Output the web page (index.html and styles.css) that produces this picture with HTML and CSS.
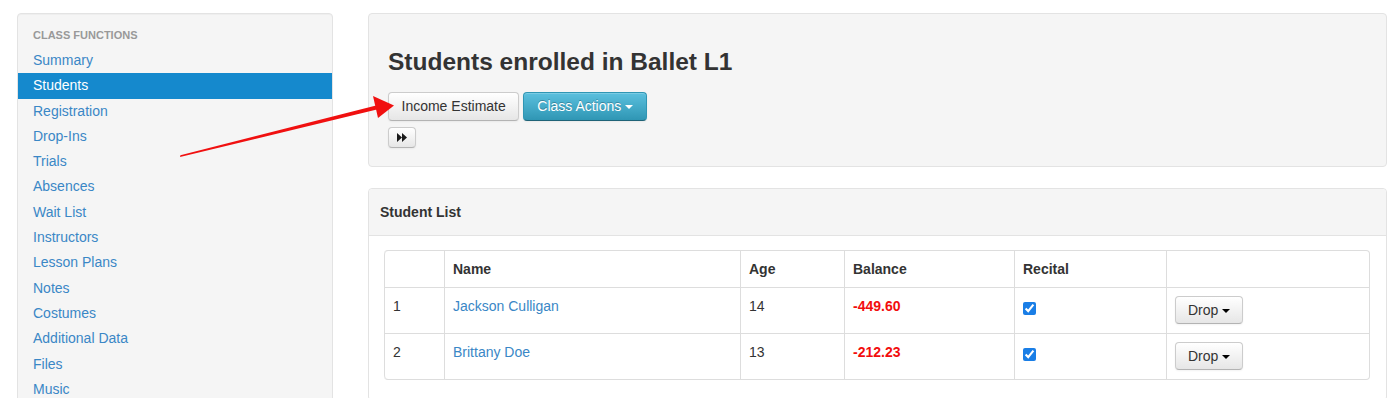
FILE: index.html
```html
<!DOCTYPE html>
<html>
<head>
<meta charset="utf-8">
<link rel="stylesheet" href="styles.css">
</head>
<body>
<div class="page">
  <aside class="sidebar">
    <div class="nav-header">CLASS FUNCTIONS</div>
    <ul class="nav-list">
      <li><a href="#">Summary</a></li>
      <li class="active"><a href="#">Students</a></li>
      <li><a href="#">Registration</a></li>
      <li><a href="#">Drop-Ins</a></li>
      <li><a href="#">Trials</a></li>
      <li><a href="#">Absences</a></li>
      <li><a href="#">Wait List</a></li>
      <li><a href="#">Instructors</a></li>
      <li><a href="#">Lesson Plans</a></li>
      <li><a href="#">Notes</a></li>
      <li><a href="#">Costumes</a></li>
      <li><a href="#">Additional Data</a></li>
      <li><a href="#">Files</a></li>
      <li><a href="#">Music</a></li>
    </ul>
  </aside>
  <main class="main">
    <section class="hero">
      <h2 class="title">Students enrolled in Ballet L1</h2>
      <div class="btn-row">
        <button class="btn">Income Estimate</button>
        <button class="btn btn-info">Class Actions <span class="caret"></span></button>
      </div>
      <div class="btn-row2">
        <button class="btn btn-mini" aria-label="forward">
          <svg width="10" height="9" viewBox="0 0 10 9"><path d="M0 0L5 4.5L0 9Z M5 0L10 4.5L5 9Z" fill="#1a1a1a"/></svg>
        </button>
      </div>
    </section>
    <section class="panel">
      <div class="panel-heading">Student List</div>
      <div class="panel-body">
        <table class="table">
          <thead>
            <tr>
              <th class="c-num"></th>
              <th class="c-name">Name</th>
              <th class="c-age">Age</th>
              <th class="c-bal">Balance</th>
              <th class="c-rec">Recital</th>
              <th class="c-act"></th>
            </tr>
          </thead>
          <tbody>
            <tr>
              <td>1</td>
              <td><a href="#">Jackson Culligan</a></td>
              <td>14</td>
              <td class="neg">-449.60</td>
              <td><input type="checkbox" checked></td>
              <td><button class="btn btn-drop">Drop <span class="caret dark"></span></button></td>
            </tr>
            <tr>
              <td>2</td>
              <td><a href="#">Brittany Doe</a></td>
              <td>13</td>
              <td class="neg">-212.23</td>
              <td><input type="checkbox" checked></td>
              <td><button class="btn btn-drop">Drop <span class="caret dark"></span></button></td>
            </tr>
          </tbody>
        </table>
      </div>
    </section>
  </main>
</div>
<svg class="arrow" width="1400" height="398" viewBox="0 0 1400 398">
  <path d="M180 157 L180.4 155.2 L380 104.5 L381 108.5 Z" fill="#f01010"/>
  <path d="M394 105.5 L373 96 L378 118 Z" fill="#f01010"/>
</svg>
</body>
</html>
```

FILE: styles.css
```css
* { box-sizing: border-box; }
html, body { margin: 0; padding: 0; background: #fff; }
body {
  font-family: "Liberation Sans", Arial, sans-serif;
  font-size: 14px;
  line-height: 20px;
  color: #333;
  height: 398px;
  overflow: hidden;
  position: relative;
}
a { color: #3a87c6; text-decoration: none; }

.page {
  display: flex;
  gap: 35px;
  padding: 13px 13px 0 17px;
  align-items: flex-start;
}

.sidebar {
  width: 316px;
  flex: none;
  background: #f5f5f5;
  border: 1px solid #e3e3e3;
  border-radius: 4px;
  padding: 11px 0 20px;
  box-shadow: inset 0 1px 1px rgba(0,0,0,0.03);
}
.nav-header {
  font-size: 11px;
  font-weight: bold;
  line-height: 20px;
  color: #999;
  padding: 0 15px 3px;
  text-transform: uppercase;
  height: 23px;
}
.nav-list { list-style: none; margin: 0; padding: 0; }
.nav-list li a {
  display: block;
  padding: 3px 15px;
  line-height: 19.3px;
  color: #3a87c6;
}
.nav-list li.active a {
  background: #1589cd;
  color: #fff;
}

.main { flex: 1; min-width: 0; display: flex; flex-direction: column; gap: 21px; }

.hero {
  background: #f5f5f5;
  border: 1px solid #e3e3e3;
  border-radius: 4px;
  padding: 30px 19px 18px;
  height: 154px;
}
.title {
  margin: 0 0 12px;
  font-size: 24.5px;
  line-height: 36px;
  font-weight: bold;
  color: #333;
}
.btn-row { display: flex; gap: 4px; height: 29px; }
.btn-row2 { margin-top: 6px; display: flex; }

.btn {
  font-family: "Liberation Sans", Arial, sans-serif;
  font-size: 14px;
  line-height: 19px;
  padding: 4px 12.5px;
  color: #333;
  background: linear-gradient(#ffffff, #e6e6e6);
  border: 1px solid #cccccc;
  border-bottom-color: #b3b3b3;
  border-radius: 4px;
  box-shadow: inset 0 1px 0 rgba(255,255,255,0.2), 0 1px 2px rgba(0,0,0,0.05);
  display: inline-flex;
  align-items: center;
  cursor: pointer;
}
.btn-info {
  color: #fff;
  background: linear-gradient(#5bc0de, #2f96b4);
  border-color: #2f96b4 #2f96b4 #1f6377;
  text-shadow: 0 -1px 0 rgba(0,0,0,0.25);
  padding: 4px 13px;
}
.caret {
  display: inline-block;
  width: 0; height: 0;
  margin-left: 4px;
  margin-top: 1px;
  border-top: 4px solid #fff;
  border-left: 4px solid transparent;
  border-right: 4px solid transparent;
}
.caret.dark { border-top-color: #000; }
.btn-mini {
  width: 28px;
  height: 21px;
  padding: 0;
  justify-content: center;
}

.panel {
  border: 1px solid #e3e3e3;
  border-radius: 4px;
  background: #fff;
}
.panel-heading {
  background: #f5f5f5;
  border-bottom: 1px solid #e3e3e3;
  padding: 13px 11px;
  font-weight: bold;
  line-height: 20px;
  color: #333;
  border-radius: 4px 4px 0 0;
}
.panel-body { padding: 14px 16px 20px 15px; }

.table {
  width: 100%;
  border-collapse: separate;
  border-spacing: 0;
  border: 1px solid #dddddd;
  border-left: 0;
  border-radius: 4px;
  table-layout: fixed;
}
.table th, .table td {
  padding: 8px;
  text-align: left;
  vertical-align: top;
  line-height: 20px;
  border-left: 1px solid #dddddd;
  border-top: 1px solid #dddddd;
}
.table td { padding-bottom: 9px; }
.table thead th { border-top: 0; font-weight: bold; }
.table thead th:first-child { border-top-left-radius: 4px; }
.table tbody tr:last-child td:first-child { border-bottom-left-radius: 4px; }
.c-num { width: 60px; }
.c-name { width: 296px; }
.c-age { width: 104px; }
.c-bal { width: 170px; }
.c-rec { width: 152px; }
.c-act { width: auto; }
.neg { color: #f20d0d; font-weight: bold; }
.table input[type=checkbox] {
  margin: 6px 0 0 0;
  width: 13px; height: 13px;
  accent-color: #1a7ee6;
}
.btn-drop { height: 28px; line-height: 18px; padding: 4px 12px; }

.arrow { position: absolute; left: 0; top: 0; pointer-events: none; }
```
